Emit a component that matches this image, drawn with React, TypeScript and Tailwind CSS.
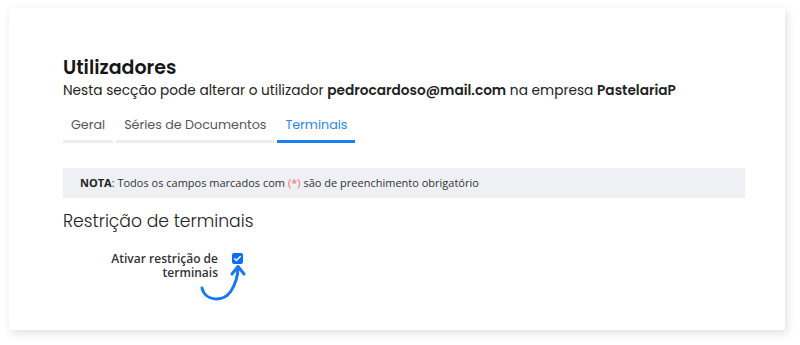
import React from 'react';

const poppins = { fontFamily: 'Poppins, Inter, "Noto Sans", sans-serif' };
const openSans = { fontFamily: '"Open Sans", "Noto Sans", sans-serif' };

const tabs = [
  { label: 'Geral', active: false },
  { label: 'Séries de Documentos', active: false },
  { label: 'Terminais', active: true },
];

export default function App() {
  return (
    <div className="w-[800px] h-[345px] bg-white pt-[8px] pl-[9px]">
      <div
        className="relative w-[776px] h-[322px] bg-white shadow-[2px_3px_8px_rgba(30,40,80,0.14)] pl-[54px] pt-[47px]"
        style={poppins}
      >
        <h1 className="text-[19px] leading-[26px] font-semibold text-[#161616]">Utilizadores</h1>
        <p className="text-[13.7px] leading-[20px] text-[#222]">
          Nesta secção pode alterar o utilizador <span className="font-semibold">pedrocardoso@mail.com</span> na empresa{' '}
          <span className="font-semibold">PastelariaP</span>
        </p>

        <div className="mt-[14px] flex gap-[3px]">
          {tabs.map(t => (
            <div
              key={t.label}
              className={`px-[8px] pb-[5px] text-[12.7px] leading-[20px] border-b-[3px] ${
                t.active ? 'border-[#1a7ff0] text-[#2a86f0]' : 'border-[#eeeeee] text-[#555]'
              }`}
            >
              {t.label}
            </div>
          ))}
        </div>

        <div
          className="mt-[25px] w-[682px] h-[30px] bg-[#eff0f4] flex items-center pl-[17px] text-[11px] text-[#333]"
          style={openSans}
        >
          <span className="font-bold text-[#222]">NOTA</span>: Todos os campos marcados com{' '}
          <span className="text-[#f06b6b] mx-[3px]">(*)</span> são de preenchimento obrigatório
        </div>

        <h2 className="mt-[10px] text-[17.2px] leading-[26px] font-light text-[#222]">Restrição de terminais</h2>

        <div className="relative mt-[18px] flex items-start">
          <div className="w-[155px] text-right text-[12px] leading-[14px] font-semibold text-[#333]" style={openSans}>
            Ativar restrição de
            <br />
            terminais
          </div>
          <div className="ml-[14px] mt-[1px] w-[11px] h-[11px] rounded-[2px] bg-[#0d6efd] flex items-center justify-center">
            <svg width="9" height="9" viewBox="0 0 16 16">
              <path d="M3 8.5l3 3 7-7" fill="none" stroke="white" strokeWidth="2.6" strokeLinecap="round" strokeLinejoin="round" />
            </svg>
          </div>
          <svg className="absolute left-[134px] top-[12px]" width="52" height="42" viewBox="0 0 52 42">
            <path
              d="M5 24 C8 37 26 39 34 27 C39 19 41 11 41 3"
              fill="none"
              stroke="#1877f2"
              strokeWidth="3"
              strokeLinecap="round"
            />
            <path
              d="M35 10 L41 2.5 L47 10"
              fill="none"
              stroke="#1877f2"
              strokeWidth="3"
              strokeLinecap="round"
              strokeLinejoin="round"
            />
          </svg>
        </div>
      </div>
    </div>
  );
}
